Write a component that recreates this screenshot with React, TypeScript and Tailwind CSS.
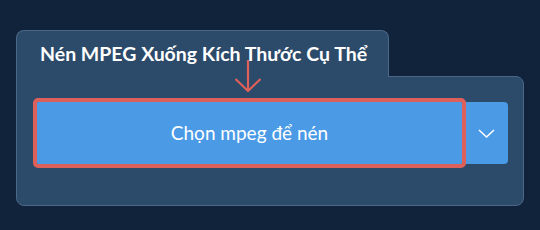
export default function App() {
  return (
    <div
      className="w-[540px] h-[230px] bg-[#11233a] pl-4 pt-[30px]"
      style={{ fontFamily: "Lato, 'Noto Sans', sans-serif" }}
    >
      <div className="relative w-[508px]">
        {/* tab */}
        <div className="relative z-10 -mb-px h-[47px] w-[373px] rounded-t-lg border border-b-0 border-[#4a6788] bg-[#2c4a6a] pl-[23px] pt-[10px]">
          <p className="text-[19.5px] font-bold leading-[26px] text-white">
            Nén MPEG Xuống Kích Thước Cụ Thể
          </p>
        </div>

        {/* panel */}
        <div className="h-[130px] rounded-lg rounded-tl-none border border-[#4a6788] bg-[#2c4a6a] pl-5 pr-[15px] pt-[25px]">
          <div className="flex h-[62px]">
            <button className="relative z-10 flex-1 bg-[#4a9ae6] text-[19px] font-normal text-white outline-[4.5px] outline-[#de605a] outline-solid rounded-[1px]">
              Chọn mpeg để nén
            </button>
            <button className="flex w-[46px] items-center justify-center rounded-r-[4px] bg-[#4a9ae6] pl-[3px] text-white">
              <svg width="17" height="9" viewBox="0 0 17 9" fill="none" stroke="currentColor" strokeWidth="1.5">
                <path d="M1 1 L8.5 8 L16 1" />
              </svg>
            </button>
          </div>
        </div>

        {/* arrow pointer */}
        <svg
          className="absolute left-[218px] top-[30px] z-20"
          width="28"
          height="33"
          viewBox="0 0 28 33"
          fill="none"
          stroke="#de605a"
          strokeWidth="2.2"
        >
          <path d="M14 0 V31" />
          <path d="M1.5 19 L14 31 L26.5 19" />
        </svg>
      </div>
    </div>
  );
}
